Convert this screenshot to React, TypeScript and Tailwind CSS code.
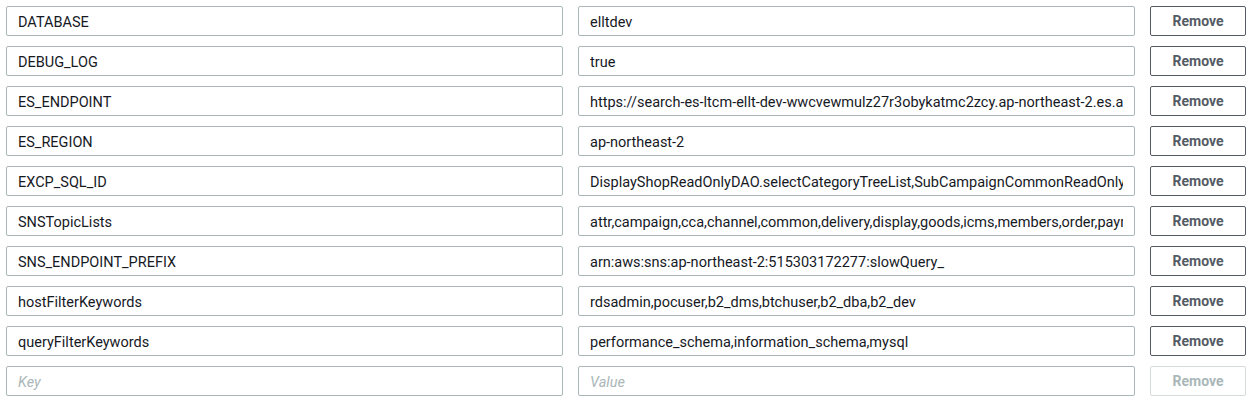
import React from "react";

const rows: [string, string][] = [
  ["DATABASE", "elltdev"],
  ["DEBUG_LOG", "true"],
  ["ES_ENDPOINT", "https://search-es-ltcm-ellt-dev-wwcvewmulz27r3obykatmc2zcy.ap-northeast-2.es.amazonaws.com"],
  ["ES_REGION", "ap-northeast-2"],
  ["EXCP_SQL_ID", "DisplayShopReadOnlyDAO.selectCategoryTreeList,SubCampaignCommonReadOnlyDAO.selectList"],
  ["SNSTopicLists", "attr,campaign,cca,channel,common,delivery,display,goods,icms,members,order,payment"],
  ["SNS_ENDPOINT_PREFIX", "arn:aws:sns:ap-northeast-2:515303172277:slowQuery_"],
  ["hostFilterKeywords", "rdsadmin,pocuser,b2_dms,btchuser,b2_dba,b2_dev"],
  ["queryFilterKeywords", "performance_schema,information_schema,mysql"],
];

const inputCls =
  "flex-1 min-w-0 h-[30px] border border-[#aab7b8] rounded-[2px] px-[11px] pt-[2px] text-[14.5px] text-[#16191f] bg-white outline-none placeholder:text-[#aab7b8] placeholder:italic";

export default function App() {
  return (
    <div
      className="w-[1259px] h-[409px] bg-white pt-[6px] pl-[6px] pr-[13px] flex flex-col gap-[10px]"
      style={{ fontFamily: "Roboto, 'Open Sans', sans-serif" }}
    >
      {rows.map(([k, v]) => (
        <div key={k} className="flex gap-[15px]">
          <input className={inputCls} defaultValue={k} readOnly />
          <input className={inputCls} defaultValue={v} readOnly />
          <button className="w-[96px] h-[30px] border border-[#545b64] rounded-[2px] text-[14px] font-bold text-[#545b64] bg-white">
            Remove
          </button>
        </div>
      ))}
      <div className="flex gap-[15px]">
        <input className={inputCls} placeholder="Key" readOnly />
        <input className={inputCls} placeholder="Value" readOnly />
        <button
          disabled
          className="w-[96px] h-[30px] border border-[#d5dbdb] rounded-[2px] text-[14px] font-bold text-[#aab7b8] bg-white"
        >
          Remove
        </button>
      </div>
    </div>
  );
}
